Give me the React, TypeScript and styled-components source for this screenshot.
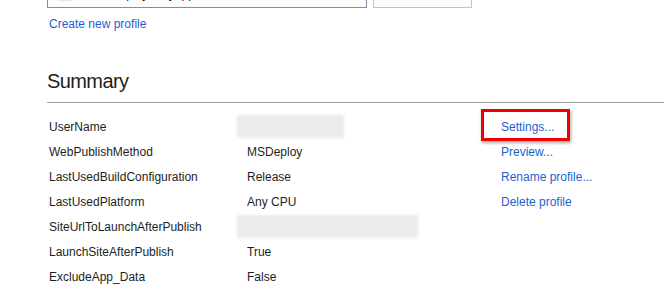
import React from 'react'
import styled, { createGlobalStyle } from 'styled-components'

const GlobalStyle = createGlobalStyle`
    html, body {
        margin: 0;
        padding: 0;
        background: #ffffff;
        overflow: hidden;
    }
    body {
        font-family: "Liberation Sans", Arial, sans-serif;
        font-size: 12px;
        color: #1e1e1e;
    }
`

type Row = {
    name: string
    value?: string
    blur?: number
    link?: string
    highlight?: boolean
}

const rows: Row[] = [
    { name: 'UserName', blur: 107, link: 'Settings...', highlight: true },
    { name: 'WebPublishMethod', value: 'MSDeploy', link: 'Preview...' },
    { name: 'LastUsedBuildConfiguration', value: 'Release', link: 'Rename profile...' },
    { name: 'LastUsedPlatform', value: 'Any CPU', link: 'Delete profile' },
    { name: 'SiteUrlToLaunchAfterPublish', blur: 181 },
    { name: 'LaunchSiteAfterPublish', value: 'True' },
    { name: 'ExcludeApp_Data', value: 'False' },
]

export default function App() {
    return (
        <Page>
            <GlobalStyle />
            <TopBar>
                <ProfileSelect>
                    <ProfileIcon />
                    <ProfileName>Web Deploy - myapp</ProfileName>
                </ProfileSelect>
                <ActionButton />
            </TopBar>
            <CreateLink href="#">Create new profile</CreateLink>

            <SummaryTitle>Summary</SummaryTitle>
            <Divider />

            <SummaryGrid>
                {rows.map((row) => (
                    <React.Fragment key={row.name}>
                        <Label>{row.name}</Label>
                        <Value>
                            {row.blur ? <Blurred $width={row.blur} /> : row.value}
                        </Value>
                        <LinkCell>
                            {row.link && <ActionLink href="#">{row.link}</ActionLink>}
                            {row.highlight && <Highlight />}
                        </LinkCell>
                    </React.Fragment>
                ))}
            </SummaryGrid>
        </Page>
    )
}

const Page = styled.div`
    padding-left: 47px;
    width: 617px;
`

const TopBar = styled.div`
    display: flex;
    gap: 6px;
    margin-top: -16px;
`

const ProfileSelect = styled.div`
    box-sizing: border-box;
    width: 320px;
    height: 24px;
    border: 1px solid #7d8da6;
    background: #fcfcfc;
    display: flex;
    align-items: center;
    gap: 12px;
    padding: 0 10px;
    line-height: 16px;
    color: #111;
`

const ProfileIcon = styled.span`
    width: 13px;
    height: 13px;
    margin-top: -4px;
    background: #e6e6e6;
`

const ProfileName = styled.span`
    margin-top: -5px;
`

const ActionButton = styled.div`
    box-sizing: border-box;
    width: 99px;
    height: 24px;
    border: 1px solid #b9c5d9;
    background: #fdfdfd;
`

const CreateLink = styled.a`
    display: block;
    width: max-content;
    margin: 8px 0 0 2px;
    line-height: 16px;
    color: #1b5fd1;
    text-decoration: none;
`

const SummaryTitle = styled.h2`
    margin: 37px 0 0;
    font-size: 20px;
    font-weight: normal;
    line-height: 24px;
    letter-spacing: -0.6px;
    color: #1e1e1e;
`

const Divider = styled.hr`
    margin: 9px 0 0;
    border: none;
    height: 1px;
    background: #a3a3a3;
`

const SummaryGrid = styled.div`
    display: grid;
    grid-template-columns: 198px 254px 1fr;
    grid-auto-rows: 25px;
    margin: 12px 0 0 2px;
    line-height: 25px;
`

const Label = styled.div`
    color: #1e1e1e;
    white-space: nowrap;
`

const Value = styled.div`
    color: #1e1e1e;
    white-space: nowrap;
`

const Blurred = styled.div<{ $width: number }>`
    width: ${(p) => p.$width}px;
    height: 23px;
    margin: 0 0 0 -10px;
    background: #ebebeb;
    filter: blur(1.5px);
`

const LinkCell = styled.div`
    position: relative;
`

const ActionLink = styled.a`
    color: #1b5fd1;
    text-decoration: none;
    white-space: nowrap;
`

const Highlight = styled.span`
    position: absolute;
    left: -20px;
    top: -6px;
    width: 89px;
    height: 32px;
    box-sizing: border-box;
    border: 3px solid #f20000;
    box-shadow: 1px 2px 3px rgba(0, 0, 0, 0.35);
    pointer-events: none;
`
